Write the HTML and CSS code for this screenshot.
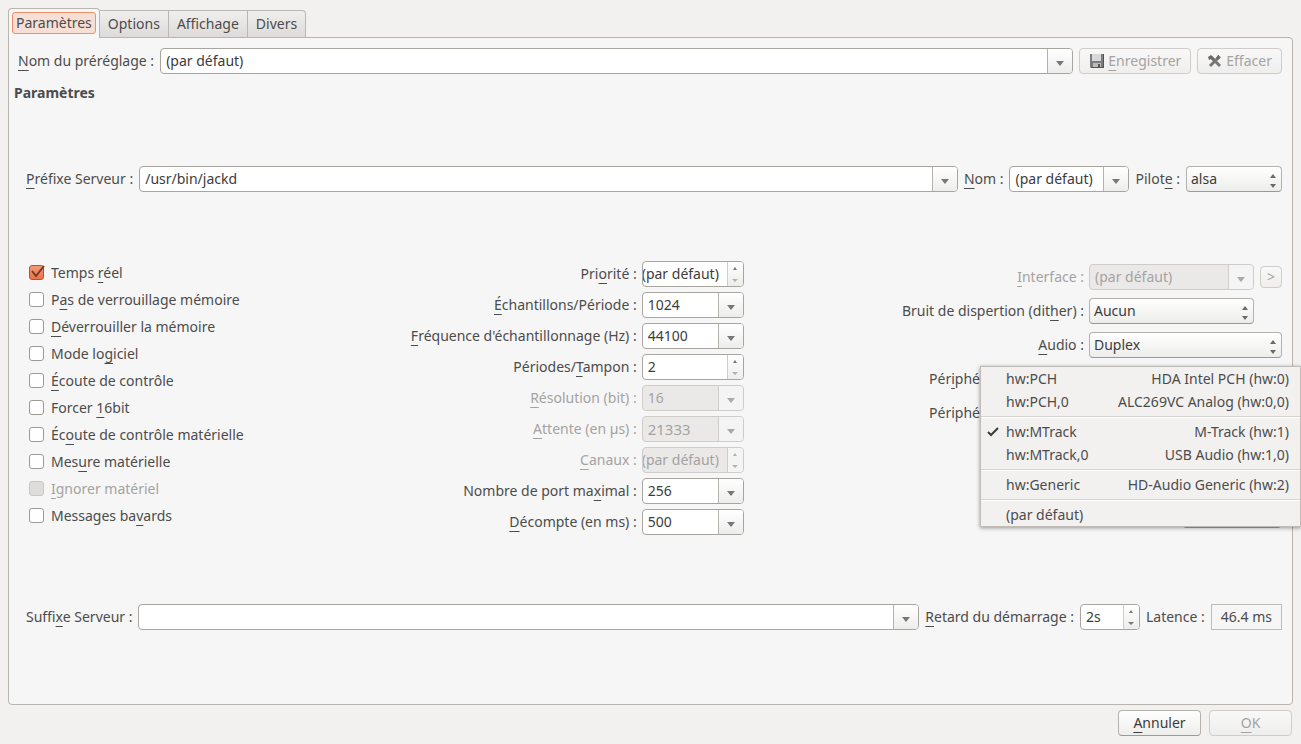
FILE: index.html
```html
<!DOCTYPE html>
<html lang="fr">
<head>
  <meta charset="UTF-8" />
  <meta name="viewport" content="width=device-width, initial-scale=1.0"/>
  <title>Paramètres</title>
  <link rel="stylesheet" href="styles.css">
</head>
<body>
  <div class="tabs" role="tablist">
    <button class="tab active" role="tab" aria-selected="true"><span>Paramètres</span></button>
    <button class="tab" role="tab">Options</button>
    <button class="tab" role="tab">Affichage</button>
    <button class="tab" role="tab">Divers</button>
  </div>

  <main class="panel">
    <div class="row preset">
      <label for="preset"><u>N</u>om du préréglage :</label>
      <div class="combo grow">
        <input type="text" id="preset" value="(par défaut)">
        <button class="arrow" aria-label="Ouvrir"></button>
      </div>
      <button class="btn" disabled>
        <svg width="16" height="16" viewBox="0 0 16 16">
          <path d="M1 1h14v14H2l-1-1z" fill="#7c7c7c"/>
          <path d="M14 1h1v14H2v-1h12z" fill="#555"/>
          <path d="M3 1h9v7H3z" fill="#d8d8d8"/>
          <path d="M4 10h8v4H4z" fill="#bdbdbd"/>
          <path d="M9 11h2v3H9z" fill="#555"/>
        </svg>
        <span><u>E</u>nregistrer</span>
      </button>
      <button class="btn" disabled>
        <svg width="16" height="16" viewBox="0 0 16 16">
          <path d="M4 4l9 9M12 4l-9 9" stroke="#777" stroke-width="3" fill="none"/>
          <path d="M1 4l3-2 4 4-2 2-2-2-2 1zM9 5l2-3h1v1l2 1-3 3z" fill="#6a6a6a"/>
        </svg>
        <span>Effacer</span>
      </button>
    </div>

    <h2>Paramètres</h2>

    <div class="settings">
      <div class="row">
        <label for="prefix"><u>P</u>réfixe Serveur :</label>
        <div class="combo grow">
          <input type="text" id="prefix" value="/usr/bin/jackd">
          <button class="arrow" aria-label="Ouvrir"></button>
        </div>
        <label for="name"><u>N</u>om :</label>
        <div class="combo name">
          <input type="text" id="name" value="(par défaut)">
          <button class="arrow" aria-label="Ouvrir"></button>
        </div>
        <label for="driver">Pilot<u>e</u> :</label>
        <div class="select driver">
          <select id="driver"><option>alsa</option></select>
          <svg class="updown" width="6" height="14" viewBox="0 0 6 14"><path d="M0 4h6L3 0zM0 10h6L3 14z"/></svg>
        </div>
      </div>

      <div class="columns">
        <div class="checks">
          <label><input type="checkbox" checked><span>Temps <u>r</u>éel</span>
            <svg class="tick" width="16" height="16" viewBox="0 0 16 16"><path d="M3 7l4 5 8-10" fill="none" stroke="#6f3a26" stroke-width="2"/></svg>
          </label>
          <label><input type="checkbox"><span>P<u>a</u>s de verrouillage mémoire</span></label>
          <label><input type="checkbox"><span><u>D</u>éverrouiller la mémoire</span></label>
          <label><input type="checkbox"><span>Mode lo<u>g</u>iciel</span></label>
          <label><input type="checkbox"><span><u>É</u>coute de contrôle</span></label>
          <label><input type="checkbox"><span>Forcer <u>1</u>6bit</span></label>
          <label><input type="checkbox"><span>Éc<u>o</u>ute de contrôle matérielle</span></label>
          <label><input type="checkbox"><span>Mes<u>u</u>re matérielle</span></label>
          <label class="off"><input type="checkbox" disabled><span><u>I</u>gnorer matériel</span></label>
          <label><input type="checkbox"><span>Messages ba<u>v</u>ards</span></label>
        </div>

        <div class="fields">
          <label for="priority">Pri<u>o</u>rité :</label>
          <div class="spin"><input type="text" class="clipped" id="priority" value="(par défaut)">
            <div class="steps"><button class="up" aria-label="Plus"></button><button class="down dim" aria-label="Moins"></button></div></div>

          <label for="frames"><u>É</u>chantillons/Période :</label>
          <div class="combo"><input type="text" id="frames" value="1024"><button class="arrow" aria-label="Ouvrir"></button></div>

          <label for="rate"><u>F</u>réquence d'échantillonnage (Hz) :</label>
          <div class="combo"><input type="text" id="rate" value="44100"><button class="arrow" aria-label="Ouvrir"></button></div>

          <label for="periods">Périodes/<u>T</u>ampon :</label>
          <div class="spin"><input type="text" id="periods" value="2">
            <div class="steps"><button class="up" aria-label="Plus"></button><button class="down dim" aria-label="Moins"></button></div></div>

          <label for="word" class="off"><u>R</u>ésolution (bit) :</label>
          <div class="combo off"><input type="text" id="word" value="16" disabled><button class="arrow" aria-label="Ouvrir" disabled></button></div>

          <label for="wait" class="off"><u>A</u>ttente (en µs) :</label>
          <div class="combo off"><input type="text" class="wide" id="wait" value="21333" disabled><button class="arrow" aria-label="Ouvrir" disabled></button></div>

          <label for="channels" class="off"><u>C</u>anaux :</label>
          <div class="spin off"><input type="text" class="clipped" id="channels" value="(par défaut)" disabled>
            <div class="steps"><button class="up" aria-label="Plus" disabled></button><button class="down" aria-label="Moins" disabled></button></div></div>

          <label for="ports">Nombre de port ma<u>x</u>imal :</label>
          <div class="combo"><input type="text" id="ports" value="256"><button class="arrow" aria-label="Ouvrir"></button></div>

          <label for="timeout"><u>D</u>écompte (en ms) :</label>
          <div class="combo"><input type="text" id="timeout" value="500"><button class="arrow" aria-label="Ouvrir"></button></div>
        </div>

        <div class="devices">
          <label for="interface" class="off"><u>I</u>nterface :</label>
          <div class="device">
            <div class="combo grow off"><input type="text" id="interface" value="(par défaut)" disabled><button class="arrow" aria-label="Ouvrir" disabled></button></div>
            <button class="btn more" disabled>&gt;</button>
          </div>

          <label for="dither">Bruit de dispertion (dit<u>h</u>er) :</label>
          <div class="device short">
            <div class="select grow">
              <select id="dither"><option>Aucun</option></select>
              <svg class="updown" width="6" height="14" viewBox="0 0 6 14"><path d="M0 4h6L3 0zM0 10h6L3 14z"/></svg>
            </div>
          </div>

          <label for="audio"><u>A</u>udio :</label>
          <div class="device">
            <div class="select grow">
              <select id="audio"><option>Duplex</option></select>
              <svg class="updown" width="6" height="14" viewBox="0 0 6 14"><path d="M0 4h6L3 0zM0 10h6L3 14z"/></svg>
            </div>
          </div>

          <label for="input" class="covered">Pér<u>i</u>phé</label>
          <div class="device anchor">
            <div class="combo grow"><input type="text" id="input"></div>
            <ul class="menu" role="menu">
              <li><span>hw:PCH</span><span>HDA Intel PCH (hw:0)</span></li>
              <li><span>hw:PCH,0</span><span>ALC269VC Analog (hw:0,0)</span></li>
              <li class="sep"></li>
              <li>
                <svg width="12" height="10" viewBox="0 0 12 10"><path d="M1 5l3 3 7-7" fill="none" stroke="#3c3c3c" stroke-width="2"/></svg>
                <span>hw:MTrack</span><span>M-Track (hw:1)</span>
              </li>
              <li><span>hw:MTrack,0</span><span>USB Audio (hw:1,0)</span></li>
              <li class="sep"></li>
              <li><span>hw:Generic</span><span>HD-Audio Generic (hw:2)</span></li>
              <li class="sep"></li>
              <li><span>(par défaut)</span></li>
            </ul>
          </div>

          <label for="output" class="covered">Périphé</label>
          <div class="device">
            <div class="combo grow"><input type="text" id="output"></div>
          </div>

          <div class="device latency">
            <div class="spin"><input type="text" aria-label="Latence"></div>
          </div>
        </div>
      </div>

      <div class="row">
        <label for="suffix">Suffi<u>x</u>e Serveur :</label>
        <div class="combo grow">
          <input type="text" id="suffix">
          <button class="arrow" aria-label="Ouvrir"></button>
        </div>
        <label for="delay"><u>R</u>etard du démarrage :</label>
        <div class="spin delay"><input type="text" id="delay" value="2s">
          <div class="steps"><button class="up" aria-label="Plus"></button><button class="down" aria-label="Moins"></button></div></div>
        <span>Latence :</span>
        <output>46.4 ms</output>
      </div>
    </div>
  </main>

  <footer>
    <button class="btn"><span><u>A</u>nnuler</span></button>
    <button class="btn" disabled><span><u>O</u>K</span></button>
  </footer>
</body>
</html>
```
FILE: styles.css
```css
* {
  margin: 0;
  padding: 0;
  box-sizing: border-box;
}

body {
  min-height: 100vh;
  display: flex;
  flex-direction: column;
  padding: 8px;
  background: #f2f1f0;
  color: #4c4c4c;
  overflow-x: hidden;
}

body, button, input, select {
  font-family: "Noto Sans", "Open Sans", sans-serif;
  font-size: 14px;
  line-height: 20px;
}

button, input, select {
  color: #3c3c3c;
}

label, .row > span {
  white-space: nowrap;
}

u {
  text-underline-offset: 4px;
  text-decoration-thickness: 1px;
  text-decoration-skip-ink: none;
}

.off, .off input, .btn:disabled {
  color: #a5a3a1;
}

/* tabs */
.tabs {
  display: flex;
  align-items: flex-end;
}

.tab {
  height: 27px;
  padding: 0 8px;
  border: 1px solid #bab7b3;
  border-left: none;
  border-bottom: none;
  background: linear-gradient(#f0efee, #dddbd9);
  color: #4c4c4c;
}

.tab:last-child {
  border-top-right-radius: 4px;
}

.tab.active {
  height: 30px;
  padding: 0 3px 2px;
  margin-bottom: -1px;
  border-left: 1px solid #bab7b3;
  border-radius: 4px 4px 0 0;
  background: #f6f6f6;
  position: relative;
}

.tab.active span {
  display: block;
  padding: 0 3px;
  border: 1px solid #f0906a;
  border-radius: 3px;
  background: #f8dfd5;
}

.panel {
  flex: 1;
  display: flex;
  flex-direction: column;
  padding: 10px 10px 0 5px;
  border: 1px solid #b8b5b1;
  border-radius: 0 4px 4px 4px;
  background: #f6f6f6;
}

.row {
  display: flex;
  align-items: center;
  gap: 6px;
}

.preset {
  padding-left: 4px;
}

.preset .btn {
  padding: 0 9px;
  gap: 3px;
}

h2 {
  margin-top: 11px;
  font-size: 14px;
  line-height: 16px;
}

.settings {
  flex: 1;
  display: flex;
  flex-direction: column;
  justify-content: space-between;
  padding: 65px 0 74px 12px;
}

.grow {
  flex: 1;
}

/* combo boxes and spin boxes */
.combo, .spin {
  display: flex;
  height: 26px;
  min-width: 0;
  border: 1px solid #a8a5a1;
  border-radius: 4px;
  background: #fff;
  overflow: hidden;
}

.combo input, .spin input {
  flex: 1;
  min-width: 0;
  padding: 0 5px;
  border: none;
  background: none;
}

.combo.off, .spin.off {
  border-color: #cfccc9;
  background: #ebe9e8;
}

.spin .clipped {
  padding: 0;
  text-indent: -1px;
}

.combo .wide {
  font-size: 15px;
}

.arrow {
  width: 25px;
  border: none;
  border-left: 1px solid #b5b2ae;
  background: linear-gradient(#fff, #ededec);
  display: grid;
  place-items: center;
}

.arrow::before {
  content: "";
  margin-top: 4px;
  border: 4px solid transparent;
  border-top: 5px solid #777;
  border-bottom: none;
}

.off .arrow, .off .steps {
  border-color: #cfccc9;
  background: #f5f4f4;
}

.off .arrow::before {
  border-top-color: #a9a9a9;
}

.steps {
  width: 16px;
  display: flex;
  flex-direction: column;
  border-left: 1px solid #cfccc9;
  background: linear-gradient(#fff, #ededec);
}

.steps button {
  flex: 1;
  border: none;
  background: none;
  display: grid;
  place-items: center;
}

.steps button::before {
  content: "";
  border: 0 solid transparent;
}

.steps .up::before {
  border-width: 0 2px 3px;
  border-bottom-color: #777;
}

.steps .down::before {
  border-width: 3px 3px 0;
  border-top-color: #777;
}

.steps .down.dim::before, .off .down::before {
  border-top-color: #b0b0b0;
}

.off .up::before {
  border-bottom-color: #b0b0b0;
}

.select {
  position: relative;
}

.select select {
  appearance: none;
  display: block;
  width: 100%;
  height: 26px;
  padding: 0 4px;
  border: 1px solid #b5b2ae;
  border-bottom-color: #9b9895;
  border-radius: 4px;
  background: linear-gradient(#fff, #ededec);
}

.updown {
  position: absolute;
  right: 6px;
  top: 8px;
  fill: #6a6a6a;
}

.name {
  width: 120px;
}

.driver {
  width: 96px;
}

.delay {
  width: 60px;
}

output {
  padding: 2px 9px;
  border: 1px solid #bfbcb8;
}

.btn {
  height: 26px;
  padding: 0 8px;
  border: 1px solid #b5b2ae;
  border-bottom-color: #9b9895;
  border-radius: 4px;
  background: linear-gradient(#fff, #ededec);
  display: flex;
  align-items: center;
  justify-content: center;
}

.btn:disabled {
  border-color: #cfccc9;
  background: linear-gradient(#f8f8f8, #efeeed);
}

/* three columns */
.columns {
  display: grid;
  grid-template-columns: 5fr 11fr 12fr;
  padding-bottom: 2px;
}

.checks {
  padding-left: 3px;
}

.checks label {
  display: flex;
  align-items: center;
  gap: 7px;
  height: 27px;
  position: relative;
}

.checks input {
  appearance: none;
  width: 15px;
  height: 15px;
  border: 1px solid #9d9a96;
  border-radius: 3px;
  background: #fff;
}

.checks input:checked {
  border-color: #b5532f;
  background: linear-gradient(#f59a76, #ec7345);
}

.checks input:disabled {
  border-color: #c9c6c3;
  background: #dfdddb;
}

.tick {
  position: absolute;
  left: 0;
  top: 5px;
}

.fields, .devices {
  display: grid;
  align-content: start;
  align-items: center;
  justify-content: end;
  justify-items: end;
}

.fields {
  grid-template-columns: auto 102px;
  gap: 5px;
  padding-top: 2px;
}

.fields .combo, .fields .spin {
  width: 100%;
}

.devices {
  grid-template-columns: auto 193px;
  gap: 8px 5px;
  padding-top: 5px;
}

.device {
  width: 100%;
  display: flex;
  align-items: center;
  gap: 6px;
}

.device.short {
  padding-right: 28px;
}

.device .more {
  width: 22px;
  height: 22px;
  padding: 0;
}

.device.latency {
  grid-column: 2;
  justify-content: flex-end;
  margin-top: 68px;
}

.latency .spin {
  width: 100px;
}

.covered {
  padding-right: 104px;
}

.anchor {
  position: relative;
}

.menu {
  position: absolute;
  top: 0;
  right: -19px;
  width: 321px;
  border: 1px solid #bfbcb8;
  background: #f2f1f0;
  box-shadow: 0 1px 4px rgba(0, 0, 0, 0.4);
  list-style: none;
  z-index: 1;
}

.menu li {
  display: flex;
  justify-content: space-between;
  align-items: center;
  height: 23px;
  padding: 0 11px 0 25px;
  position: relative;
}

.menu svg {
  position: absolute;
  left: 6px;
}

.menu .sep {
  height: 7px;
  padding: 0;
}

.menu .sep::before {
  content: "";
  flex: 1;
  border-top: 1px solid #d5d3d1;
  border-bottom: 1px solid #fff;
}

footer {
  display: flex;
  justify-content: flex-end;
  gap: 8px;
  padding: 5px 1px 0 0;
}

footer .btn {
  width: 83px;
}
```
